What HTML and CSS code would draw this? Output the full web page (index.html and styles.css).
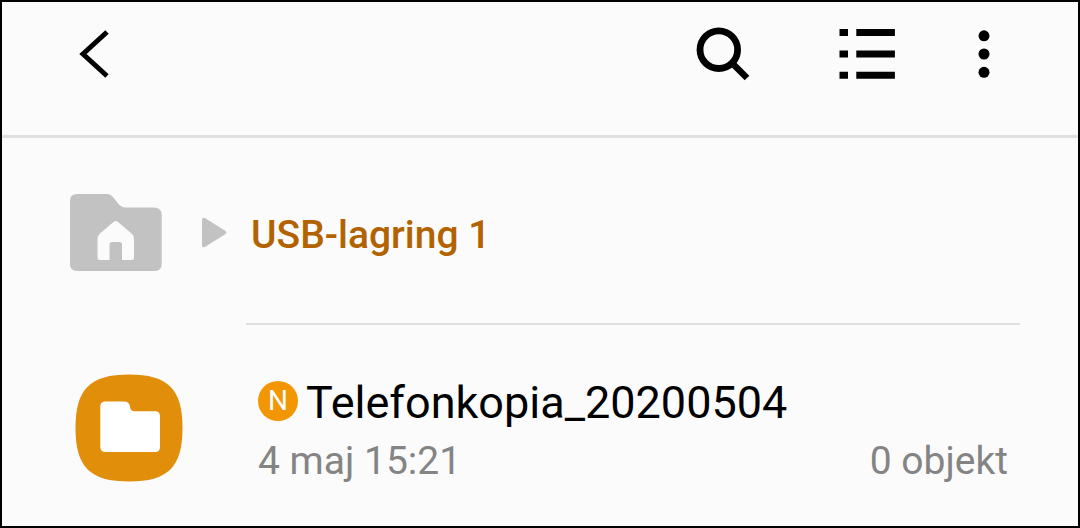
FILE: index.html
```html
<!DOCTYPE html>
<html lang="sv">

<head>
    <meta charset="UTF-8">
    <meta name="viewport" content="width=device-width, initial-scale=1.0">
    <title>USB-lagring 1</title>
    <link rel="stylesheet" href="styles.css">
</head>

<body>
    <header class="toolbar">
        <button class="icon-button back" type="button" aria-label="Tillbaka">
            <svg width="64" height="64" viewBox="0 0 64 64">
                <path d="M45 10 L21 32 L45 54" fill="none" stroke="#000" stroke-width="5" />
            </svg>
        </button>
        <button class="icon-button" type="button" aria-label="Sök">
            <svg width="64" height="64" viewBox="0 0 64 64">
                <circle cx="28.8" cy="27.7" r="18.8" fill="none" stroke="#000" stroke-width="6.8" />
                <path d="M41.5 40.5 L57 56" stroke="#000" stroke-width="6.6" />
            </svg>
        </button>
        <button class="icon-button" type="button" aria-label="Visa som lista">
            <svg width="64" height="64" viewBox="0 0 64 64">
                <path d="M5.5 7h8.5v7h-8.5z M22.3 7h38.6v7h-38.6z M5.5 28.5h8.5v7h-8.5z M22.3 28.5h38.6v7h-38.6z M5.5 49.7h8.5v7h-8.5z M22.3 49.7h38.6v7h-38.6z" />
            </svg>
        </button>
        <button class="icon-button" type="button" aria-label="Fler alternativ">
            <svg width="12" height="64" viewBox="0 0 12 64">
                <circle cx="6" cy="13.8" r="5.5" />
                <circle cx="6" cy="32" r="5.5" />
                <circle cx="6" cy="50.3" r="5.5" />
            </svg>
        </button>
    </header>

    <main>
        <nav class="breadcrumb" aria-label="Sökväg">
            <a class="home" href="#" aria-label="Hem">
                <svg width="92" height="77" viewBox="0 0 92 77">
                    <path fill="#c2c2c2" d="M7 0H37Q40 0 42 2L49 10.5Q52 13.5 55 13.5H84Q91.7 13.5 91.7 21V70Q91.7 77 84.7 77H7Q0 77 0 70V7Q0 0 7 0Z" />
                    <path fill="#fbfbfb" d="M43.5 28Q45.7 26.2 48 28L61.5 39.5Q64 41.5 64 45V63.5Q64 66 61.5 66H52V50.5Q52 48 49.500 48H42Q39.5 48 39.5 50.5V66H30Q27.5 66 27.5 63.5V45Q27.5 41.5 30 39.5Z" />
                </svg>
            </a>
            <svg class="separator" width="25" height="32" viewBox="0 0 25 32" aria-hidden="true">
                <path fill="#c2c2c2" d="M0 3Q0 -0.5 3.3 1.3L22.800 13.500Q25.800 15.500 22.800 17.500L3.300 29.700Q0 31.500 0 28Z" />
            </svg>
            <a class="current" href="#" aria-current="page">USB-lagring 1</a>
        </nav>

        <ul class="file-list">
            <li class="file">
                <svg class="file-icon" width="108" height="108" viewBox="0 0 108 108" aria-hidden="true">
                    <path fill="#e18f0a" d="M54 0.5C93 0.5 107.5 15 107.5 54C107.5 93 93 107.5 54 107.5C15 107.5 0.5 93 0.5 54C0.5 15 15 0.5 54 0.5Z" />
                    <path fill="#fff" d="M30.5 27.5H49Q54.5 27.5 55 33Q55.5 37.3 60 37.3H80Q85 37.3 85 42.5V73Q85 78 80 78H30.5Q25.3 78 25.3 73V32.5Q25.3 27.5 30.5 27.5Z" />
                </svg>
                <div class="file-info">
                    <div class="file-name">
                        <span class="badge">N</span>
                        <a href="#">Telefonkopia_20200504</a>
                    </div>
                    <div class="file-meta">
                        <span>4 maj 15:21</span>
                        <span>0 objekt</span>
                    </div>
                </div>
            </li>
        </ul>
    </main>
</body>

</html>
```
FILE: styles.css
```css
* {
    margin: 0;
    padding: 0;
    box-sizing: border-box;
}

body {
    min-height: 100vh;
    border: 2px solid #000;
    background: #fbfbfb;
    color: #000;
    font-family: Roboto, sans-serif;
    font-size: 39px;
    line-height: 48px;
}

a {
    color: inherit;
    text-decoration: none;
}

svg {
    display: block;
    flex-shrink: 0;
}

.toolbar {
    display: flex;
    gap: 80px;
    padding: 20px 88px 49px 60px;
    border-bottom: 3px solid #e0e0e0;
}

.icon-button {
    border: none;
    background: none;
    cursor: pointer;
}

.back {
    margin-right: auto;
}

.breadcrumb {
    display: flex;
    align-items: center;
    padding: 56px 68px 52px;
}

.separator {
    margin: 0 24px 0 40px;
}

.current {
    padding-top: 4px;
    color: #b26300;
    font-weight: 500;
}

.file-list {
    list-style: none;
}

.file {
    display: flex;
    padding: 0 58px 40px 73px;
}

.file-icon {
    margin-top: 51px;
    margin-right: 63px;
}

.file-info {
    flex: 1;
    padding: 50px 12px 0;
    border-top: 2px solid #e0e0e0;
}

.file-name {
    display: flex;
    align-items: center;
    gap: 8px;
    font-size: 45px;
    line-height: 56px;
}

.badge {
    width: 40px;
    height: 40px;
    margin-bottom: 4px;
    border-radius: 50%;
    background: #f39604;
    color: #fff;
    font-size: 28px;
    line-height: 40px;
    text-align: center;
}

.file-meta {
    display: flex;
    justify-content: space-between;
    margin-top: 6px;
    color: #848484;
}
```
